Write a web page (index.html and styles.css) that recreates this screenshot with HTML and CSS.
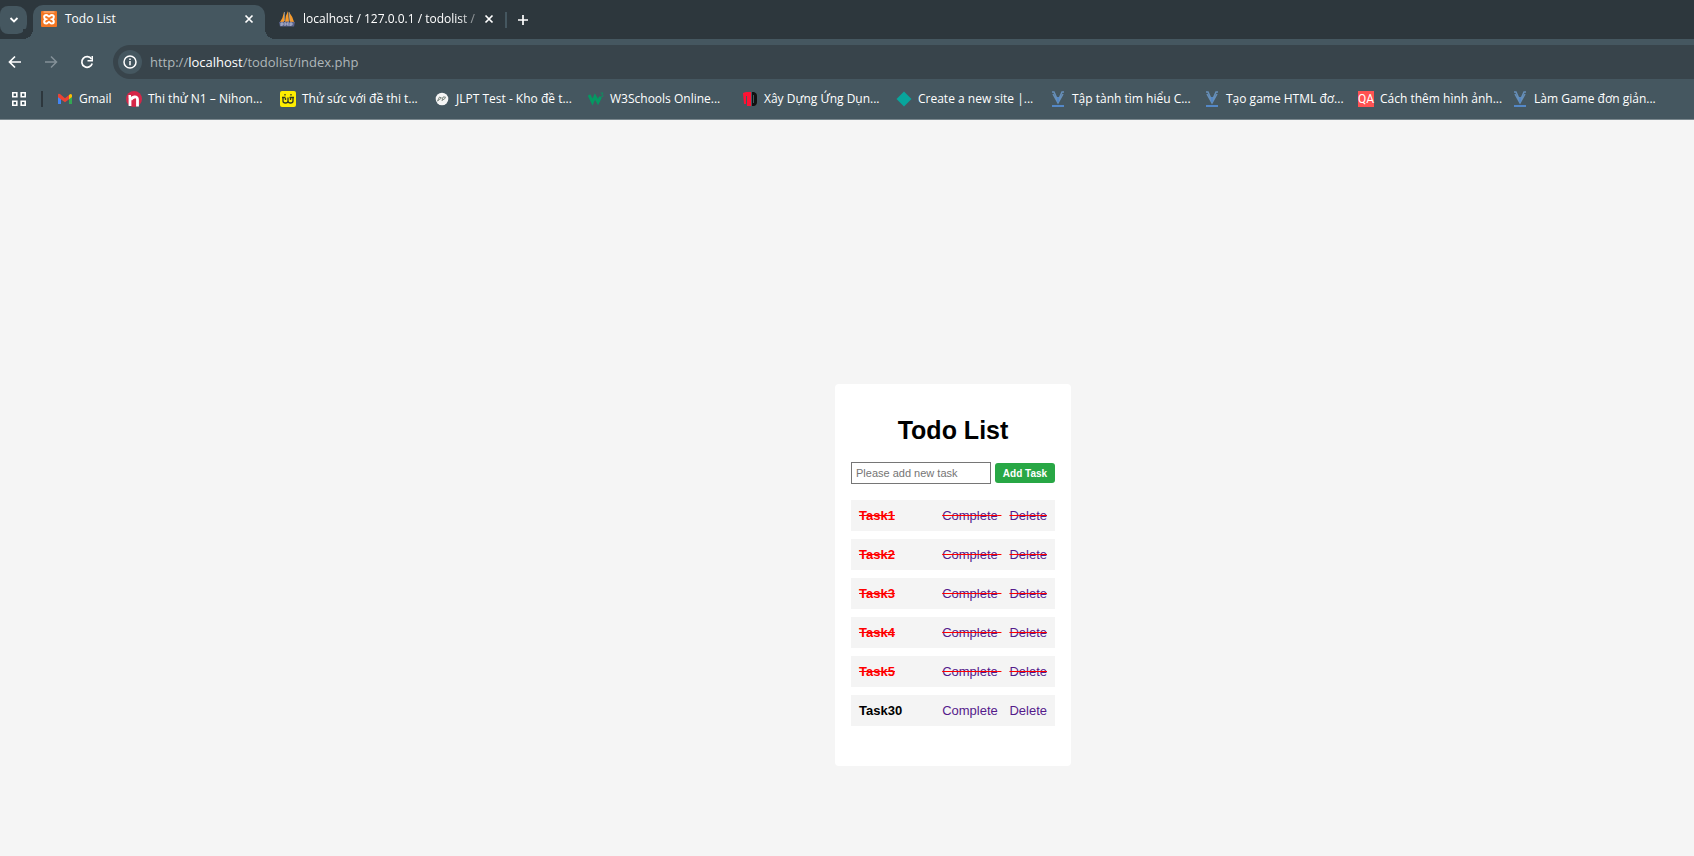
FILE: index.html
```html
<!DOCTYPE html>
<html lang="en">
<head>
<meta charset="utf-8">
<title>Todo List</title>
<link rel="stylesheet" href="styles.css">
</head>
<body>
<header class="browser">
  <div class="tab-strip">
    <button class="tab-search" aria-label="Search tabs"><svg width="10" height="6" viewBox="0 0 10 6"><path d="M1.500 1l3.500 3.500L8.500 1" fill="none" stroke="#fff" stroke-width="1.800"/></svg></button>
    <div class="tab tab-active">
      <svg width="16" height="16" viewBox="0 0 16 16"><rect width="16" height="16" rx="1" fill="#f37623"/><path d="M2.500 1h11" stroke="#fbc39b"/><path d="M5.200 4C6.800 4 7 5.500 8 5.500S9.200 4 10.800 4c2.600 0 2.600 3 .7 4.300 1.900 1.300 1.900 4.200-.7 4.200-1.600 0-1.800-1.500-2.800-1.500s-1.200 1.500-2.800 1.500c-2.600 0-2.600-2.900-.7-4.200C2.600 7 2.600 4 5.200 4z" fill="none" stroke="#fff" stroke-width="2"/><path d="M4.500 8.300h2M9.500 8.300h2" stroke="#fff" stroke-width="1.500"/></svg>
      <span class="tab-title">Todo List</span>
      <button class="icon-button" aria-label="Close tab"><svg width="10" height="10" viewBox="0 0 10 10"><path d="M1.500 1.500l7 7M8.500 1.500l-7 7" stroke="#fff" stroke-width="1.700"/></svg></button>
    </div>
    <div class="tab">
      <svg width="16" height="16" viewBox="0 0 16 16"><path d="M5 1v10H1q3-4 4-10M9 0q-3 5-3 11h4zM10 1q4 5 5 10h-4z" fill="#f79a2b"/><path d="M5.500 1v9M10 1l1 9" stroke="#a8aeb2" stroke-width=".7"/><path d="M0 11q8-1 16 0l-1 4.500H1z" fill="#59628c"/><path d="M2 15v-3h2v2H2m4 1v-4m0 2h3m0-2v4m2 0v-3h2v2h-2" fill="none" stroke="#c4c8dc" stroke-width=".8"/></svg>
      <span class="tab-title tab-title-fade">localhost / 127.0.0.1 / todolist /</span>
      <button class="icon-button" aria-label="Close tab"><svg width="10" height="10" viewBox="0 0 10 10"><path d="M1.500 1.500l7 7M8.500 1.500l-7 7" stroke="#fff" stroke-width="1.700"/></svg></button>
    </div>
    <span class="tab-divider"></span>
    <button class="icon-button" aria-label="New tab"><svg width="12" height="12" viewBox="0 0 12 12"><path d="M6 1v10M1 6h10" stroke="#fff" stroke-width="1.700"/></svg></button>
  </div>
  <div class="toolbar">
    <button class="icon-button" aria-label="Back"><svg width="14" height="14" viewBox="0 0 14 14"><path d="M13 7H2M7 1.500L1.500 7 7 12.500" fill="none" stroke="#fff" stroke-width="1.700"/></svg></button>
    <button class="icon-button" aria-label="Forward" disabled><svg width="14" height="14" viewBox="0 0 14 14"><path d="M1 7h11M7 1.500L12.500 7 7 12.500" fill="none" stroke="#849198" stroke-width="1.500"/></svg></button>
    <button class="icon-button" aria-label="Reload"><svg width="14" height="14" viewBox="0 0 14 14"><path d="M11.500 4A5.300 5.300 0 1 0 12.200 8.500" fill="none" stroke="#fff" stroke-width="1.700"/><path d="M13 1v5.500H7.500V5h4V1z" fill="#fff"/></svg></button>
    <div class="address">
      <button class="site-info" aria-label="Site information"><svg width="14" height="14" viewBox="0 0 14 14"><circle cx="7" cy="7" r="6" fill="none" stroke="#fff" stroke-width="1.500"/><path d="M7 6v4.300M7 3.600v1.500" stroke="#fff" stroke-width="1.500"/></svg></button>
      <span class="url">http://<span class="url-host">localhost</span>/todolist/index.php</span>
    </div>
  </div>
  <nav class="bookmarks" aria-label="Bookmarks">
    <button class="icon-button apps" aria-label="Apps"><svg width="14" height="14" viewBox="0 0 14 14" fill="none" stroke="#fff" stroke-width="1.600"><path d="M.8.800h4v4h-4zM9.200.800h4v4h-4zM.8 9.200h4v4h-4zM9.200 9.200h4v4h-4z"/></svg></button>
    <span class="bookmark-divider"></span>
    <a class="bookmark bookmark-short" href="#"><svg width="16" height="16" viewBox="-1 0 16 16"><path d="M0 4v9h3V6z" fill="#4285f4"/><path d="M11 6v7h3V4z" fill="#34a853"/><path d="M0 3.500v2.700l7 5 4-3V4L7 7.200 2 3Q0 2.500 0 3.500" fill="#ea4335"/><path d="M11 4v4.300l3-2.200V4q-1-2-3 0" fill="#fbbc04"/></svg>Gmail</a>
    <a class="bookmark" href="#"><svg width="16" height="16" viewBox="0 0 16 16"><circle cx="8" cy="8" r="8" fill="#d52648"/><path d="M4 15V6M2.500 5.500H5M11.500 15.500V8.500Q11.500 5.700 8.500 6 5.500 6.500 5 9" fill="none" stroke="#fff" stroke-width="2.800"/></svg>Thi thử N1 – Nihon...</a>
    <a class="bookmark" href="#"><svg width="16" height="16" viewBox="0 0 16 16"><rect width="16" height="16" rx="2" fill="#ffed00"/><path d="M3 6v4q0 2 2.500 2T8 10V6.500V10q0 2 2.500 2T13 10V6M2 6.500h3.500M9.500 6.500H14M5.500 7v2M10.500 7v2M5 3v1.500M11 3v1.500" fill="none" stroke="#333a22" stroke-width="1.300"/></svg>Thử sức với đề thi t...</a>
    <a class="bookmark" href="#"><svg width="16" height="16" viewBox="-1 0 16 16"><circle cx="7" cy="8" r="6.300" fill="#f5f5f5"/><path d="M2.500 10l2-4 2 1-2 1.500zM7 10l1-4h2.500l-1 2-2 1" fill="none" stroke="#7b857e" stroke-width="1"/></svg>JLPT Test - Kho đề t...</a>
    <a class="bookmark" href="#"><svg width="16" height="16" viewBox="0 0 16 16"><path d="M1 4l3.500 7L7 5.500l3 5.500 2.500-5" fill="none" stroke="#059862" stroke-width="3"/><path d="M12.500 2h2.700l-1.500 1.500q1.800.300 1.300 1.700-.800 1.300-2.500.300" fill="none" stroke="#059862" stroke-width=".8"/></svg>W3Schools Online...</a>
    <a class="bookmark" href="#"><svg width="16" height="16" viewBox="0 0 16 16"><path d="M1 2l3-1h5v14H5V5H4v8H2z" fill="#ff1234"/><path d="M10 1h2q3 1 3 4v6q0 3-3 4h-2z" fill="#111"/><path d="M11.500 4v8" stroke="#455760" stroke-width="1"/></svg>Xây Dựng Ứng Dụn...</a>
    <a class="bookmark" href="#"><svg width="16" height="16" viewBox="0 0 16 16"><path d="M8 .5L15.500 8 8 15.500.500 8z" fill="#08a69c"/></svg>Create a new site |...</a>
    <a class="bookmark" href="#"><svg width="16" height="16" viewBox="-1 0 16 16"><path d="M1 1h2l4 9 4-9h2M2 3l5 9 5-9" fill="none" stroke="#668fb9" stroke-width="1.500"/><path d="M7 6v5" stroke="#5488c7" stroke-width="2"/><path d="M1 15h12" stroke="#5488c7" stroke-width="2"/></svg>Tập tành tìm hiểu C...</a>
    <a class="bookmark" href="#"><svg width="16" height="16" viewBox="-1 0 16 16"><path d="M1 1h2l4 9 4-9h2M2 3l5 9 5-9" fill="none" stroke="#668fb9" stroke-width="1.500"/><path d="M7 6v5" stroke="#5488c7" stroke-width="2"/><path d="M1 15h12" stroke="#5488c7" stroke-width="2"/></svg>Tạo game HTML đơ...</a>
    <a class="bookmark" href="#"><span class="qa">QA</span>Cách thêm hình ảnh...</a>
    <a class="bookmark" href="#"><svg width="16" height="16" viewBox="-1 0 16 16"><path d="M1 1h2l4 9 4-9h2M2 3l5 9 5-9" fill="none" stroke="#668fb9" stroke-width="1.500"/><path d="M7 6v5" stroke="#5488c7" stroke-width="2"/><path d="M1 15h12" stroke="#5488c7" stroke-width="2"/></svg>Làm Game đơn giản...</a>
  </nav>
</header>
<main class="page">
  <section class="card">
    <h1 class="title">Todo List</h1>
    <form class="add-form">
      <input class="task-input" type="text" placeholder="Please add new task" aria-label="New task">
      <button class="add-button" type="submit">Add Task</button>
    </form>
    <ul class="tasks">
      <li class="task task-done"><strong>Task1</strong><span class="actions"><s class="action"><a href="#">Complete</a>&nbsp;</s><s class="action"><a href="#">Delete</a></s></span></li>
      <li class="task task-done"><strong>Task2</strong><span class="actions"><s class="action"><a href="#">Complete</a>&nbsp;</s><s class="action"><a href="#">Delete</a></s></span></li>
      <li class="task task-done"><strong>Task3</strong><span class="actions"><s class="action"><a href="#">Complete</a>&nbsp;</s><s class="action"><a href="#">Delete</a></s></span></li>
      <li class="task task-done"><strong>Task4</strong><span class="actions"><s class="action"><a href="#">Complete</a>&nbsp;</s><s class="action"><a href="#">Delete</a></s></span></li>
      <li class="task task-done"><strong>Task5</strong><span class="actions"><s class="action"><a href="#">Complete</a>&nbsp;</s><s class="action"><a href="#">Delete</a></s></span></li>
      <li class="task"><strong>Task30</strong><span class="actions"><span class="action"><a href="#">Complete</a>&nbsp;</span><span class="action"><a href="#">Delete</a></span></span></li>
    </ul>
  </section>
</main>
</body>
</html>
```
FILE: styles.css
```css
* { box-sizing: border-box; }
body {
  margin: 0;
  min-height: 100vh;
  display: flex;
  flex-direction: column;
  background: #f5f5f5;
  font-family: "Liberation Sans", Arial, sans-serif;
}
button { padding: 0; border: 0; background: none; font: inherit; color: inherit; }
svg { display: block; flex: none; }

.browser {
  background: #455760;
  border-bottom: 1px solid #7b888e;
  color: #fff;
  font: 12px/18px "Open Sans", "Noto Sans", sans-serif;
}
.tab-strip {
  display: flex;
  align-items: center;
  height: 39px;
  background: #2d373d;
}
.tab-search {
  width: 27px;
  height: 28px;
  margin-right: 6px;
  display: grid;
  place-items: center;
  background: #455760;
  border-radius: 8px 10px 10px 8px;
}
.tab {
  display: flex;
  align-items: center;
  gap: 8px;
  width: 240px;
  height: 34px;
  margin-top: 5px;
  padding: 0 12px 6px 14px;
}
.tab-active {
  position: relative;
  width: 232px;
  padding: 0 10px 6px 8px;
  background: #455760;
  border-radius: 10px 10px 0 0;
}
.tab-active::before,
.tab-active::after {
  content: "";
  position: absolute;
  bottom: 0;
  width: 10px;
  height: 10px;
}
.tab-active::before { right: 100%; background: radial-gradient(circle at 0 0, #2d373d 10px, #455760 10px); }
.tab-active::after { left: 100%; background: radial-gradient(circle at 100% 0, #2d373d 10px, #455760 10px); }
.tab-title { flex: 1; white-space: nowrap; }
.tab-title-fade { mask-image: linear-gradient(to right, #000 90%, #0006); }
.icon-button { width: 12px; display: grid; place-items: center; flex: none; }
.tab-divider { width: 2px; height: 16px; background: #455760; margin-right: 10px; }

.toolbar {
  display: flex;
  align-items: center;
  gap: 24px;
  padding: 6px 0 0 8px;
}
.address {
  flex: 1;
  display: flex;
  align-items: center;
  gap: 8px;
  height: 34px;
  margin-left: -3px;
  padding-left: 5px;
  background: #38444b;
  border-radius: 17px 0 0 17px;
}
.site-info {
  width: 24px;
  height: 24px;
  display: grid;
  place-items: center;
  border-radius: 50%;
  background: #455760;
}
.url { font-size: 13px; color: #afb7ba; }
.url-host { color: #fff; }

.bookmarks {
  display: flex;
  align-items: center;
  height: 40px;
  padding-left: 12px;
  overflow: hidden;
}
.apps { width: 14px; }
.bookmark-divider { width: 2px; height: 16px; margin: 0 14px 0 15px; background: #2d373d; flex: none; }
.bookmark {
  flex: none;
  display: flex;
  align-items: center;
  gap: 6px;
  width: 154px;
  color: #fff;
  text-decoration: none;
  white-space: nowrap;
}
.bookmark-short { width: 69px; }
.qa {
  width: 16px;
  height: 16px;
  background: #ff5252;
  font: 12px/16px Roboto, sans-serif;
  text-align: center;
}

.page {
  flex: 1;
  display: flex;
  justify-content: center;
  align-items: flex-start;
  padding: 264px 0 16px 212px;
}
.card {
  width: 236px;
  padding: 30px 16px 40px;
  background: #fff;
  border-radius: 4px;
}
.title { margin: 0 0 16px; font-size: 25px; line-height: 32px; text-align: center; }
.add-form { display: flex; align-items: center; gap: 4px; margin-bottom: 16px; }
.task-input {
  flex: 1;
  min-width: 0;
  height: 22px;
  padding: 0 4px;
  border: 1px solid #767676;
  border-radius: 0;
  background: #fff;
  font: 11px/16px "Liberation Sans", Arial, sans-serif;
}
.task-input::placeholder { color: #757575; }
.add-button {
  width: 60px;
  height: 20px;
  background: #28a745;
  border-radius: 3px;
  color: #fff;
  font-size: 10px;
  font-weight: bold;
}
.tasks {
  list-style: none;
  margin: 0;
  padding: 0;
  display: grid;
  gap: 8px;
  font-size: 13px;
  line-height: 15px;
}
.task {
  display: flex;
  justify-content: space-between;
  padding: 8px;
  background: #f4f4f4;
}
.task-done { color: #f00; }
.task-done strong { text-decoration: line-through; }
.actions { display: flex; gap: 8px; }
.action a { color: #551a8b; text-decoration: none; }
```
